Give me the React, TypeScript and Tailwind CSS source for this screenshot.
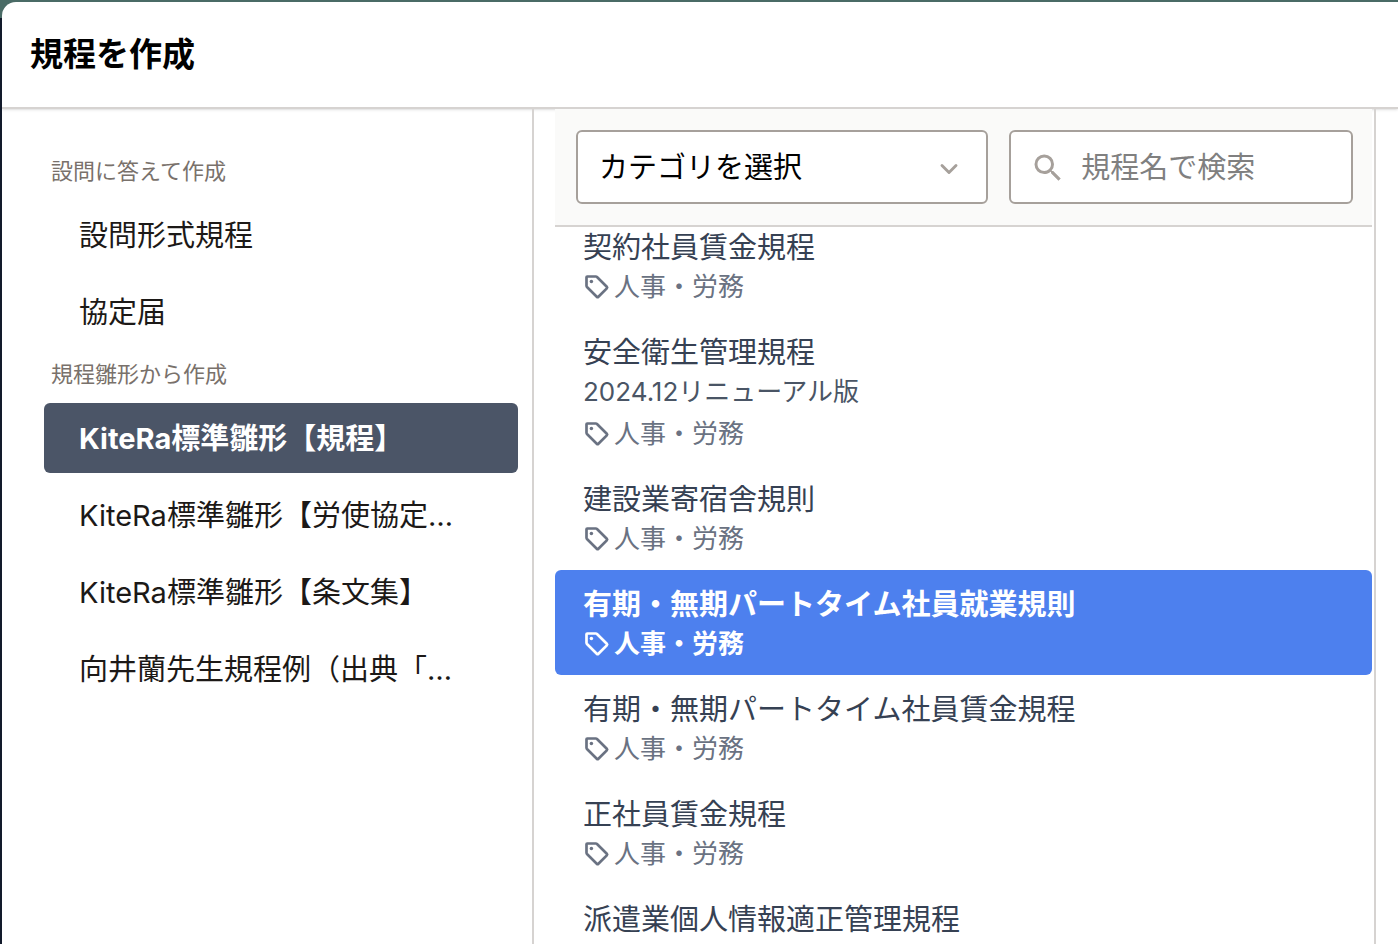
import React from 'react';
import { ChevronDown } from 'lucide-react';
import { MdSearch } from 'react-icons/md';

const sections = [
  { title: '設問に答えて作成', items: ['設問形式規程', '協定届'] },
  {
    title: '規程雛形から作成',
    items: ['KiteRa標準雛形【規程】', 'KiteRa標準雛形【労使協定…', 'KiteRa標準雛形【条文集】', '向井蘭先生規程例（出典「…'],
  },
];

const templates = [
  { name: '契約社員賃金規程', tag: '人事・労務' },
  { name: '安全衛生管理規程', note: '2024.12リニューアル版', tag: '人事・労務' },
  { name: '建設業寄宿舎規則', tag: '人事・労務' },
  { name: '有期・無期パートタイム社員就業規則', tag: '人事・労務' },
  { name: '有期・無期パートタイム社員賃金規程', tag: '人事・労務' },
  { name: '正社員賃金規程', tag: '人事・労務' },
  { name: '派遣業個人情報適正管理規程', tag: '人事・労務' },
];

const selectedSection = 'KiteRa標準雛形【規程】';
const selectedTemplate = '有期・無期パートタイム社員就業規則';

function TagIcon() {
  return (
    <svg className="w-7 h-7 shrink-0" viewBox="0 0 24 24" fill="none" stroke="currentColor" strokeWidth="2.3" strokeLinecap="round" strokeLinejoin="round" aria-hidden="true">
      <path d="M3.6 3H11a1.5 1.5 0 0 1 1 .4l8.4 8.4a1 1 0 0 1 0 1.4l-7.2 7.2a1 1 0 0 1-1.4 0L3.4 12a1.5 1.5 0 0 1-.4-1V3.6a.6.6 0 0 1 .6-.6z" />
      <circle cx="7.2" cy="7.2" r="1.5" fill="currentColor" stroke="none" />
    </svg>
  );
}

function Sidebar() {
  return (
    <nav className="w-[532px] shrink-0 border-r-2 border-stone-300 pt-[35px] pl-[42px] pr-[14px]">
      {sections.map((s) => (
        <section key={s.title}>
          <h2 className="h-14 pl-[7px] pb-[2px] flex items-center text-[22px] text-stone-500">{s.title}</h2>
          <div className="flex flex-col gap-[7px]">
            {s.items.map((item) => (
              <button
                key={item}
                className={`h-[70px] px-[35px] pt-[2px] rounded-md text-left text-[29px] ${item === selectedSection ? 'bg-[#4b5567] text-white font-bold' : 'text-stone-900'}`}
              >
                <span className="block truncate">{item}</span>
              </button>
            ))}
          </div>
        </section>
      ))}
    </nav>
  );
}

function Toolbar() {
  return (
    <div className="grid grid-cols-[6fr_5fr] gap-[21px] p-[21px] pr-[19px] bg-stone-50 border-b-2 border-stone-300">
      <div className="relative">
        <select aria-label="カテゴリ" className="w-full h-[74px] pl-[21px] pr-16 pt-[2px] appearance-none rounded-md border-2 border-stone-400 bg-white text-[29px] text-black">
          <option>カテゴリを選択</option>
        </select>
        <ChevronDown strokeWidth={2.5} className="absolute right-[25px] top-[25px] w-7 h-7 text-stone-400 pointer-events-none" />
      </div>
      <div className="relative">
        <MdSearch className="absolute left-[21px] top-[20px] w-9 h-9 text-stone-400 pointer-events-none" />
        <input
          type="text"
          aria-label="規程名で検索"
          placeholder="規程名で検索"
          className="w-full h-[74px] pl-[70px] pr-4 rounded-md border-2 border-stone-400 bg-white text-[29px] placeholder:text-[#808080]"
        />
      </div>
    </div>
  );
}

function TemplateList() {
  return (
    <div className="flex-1 min-h-0 overflow-hidden">
      <ul className="-mt-[14px]">
        {templates.map((t) => {
          const active = t.name === selectedTemplate;
          return (
            <li key={t.name}>
              <button className={`block w-full px-7 py-[14px] rounded-md text-left ${active ? 'bg-[#4d80ee] text-white font-bold' : ''}`}>
                <span className={`block text-[29px] leading-[42px] ${active ? '' : 'text-gray-700'}`}>{t.name}</span>
                {t.note && <span className="block mb-[7px] text-[26px] leading-[35px] text-gray-600">{t.note}</span>}
                <span className={`flex items-center gap-[3px] text-[26px] leading-[35px] ${active ? '' : 'text-gray-500'}`}>
                  <TagIcon />
                  {t.tag}
                </span>
              </button>
            </li>
          );
        })}
      </ul>
    </div>
  );
}

export default function App() {
  return (
    <div className="h-screen overflow-hidden pt-[2px] pl-[2px] bg-[linear-gradient(#4a6b66_18px,#121a2b_18px)] font-['Inter','Noto_Sans_CJK_JP',sans-serif]" lang="ja">
      <div className="h-full flex flex-col rounded-tl-[14px] overflow-hidden bg-white">
        <header className="h-[107px] shrink-0 flex items-center px-7 border-b-2 border-stone-300 shadow-sm">
          <h1 className="text-[33px] font-bold text-black">規程を作成</h1>
        </header>
        <div className="flex-1 min-h-0 flex">
          <Sidebar />
          <main className="flex-1 min-w-0 flex flex-col ml-[21px] mr-[2px]">
            <Toolbar />
            <TemplateList />
          </main>
          <aside className="w-6 shrink-0 border-l-2 border-stone-300" />
        </div>
      </div>
    </div>
  );
}
